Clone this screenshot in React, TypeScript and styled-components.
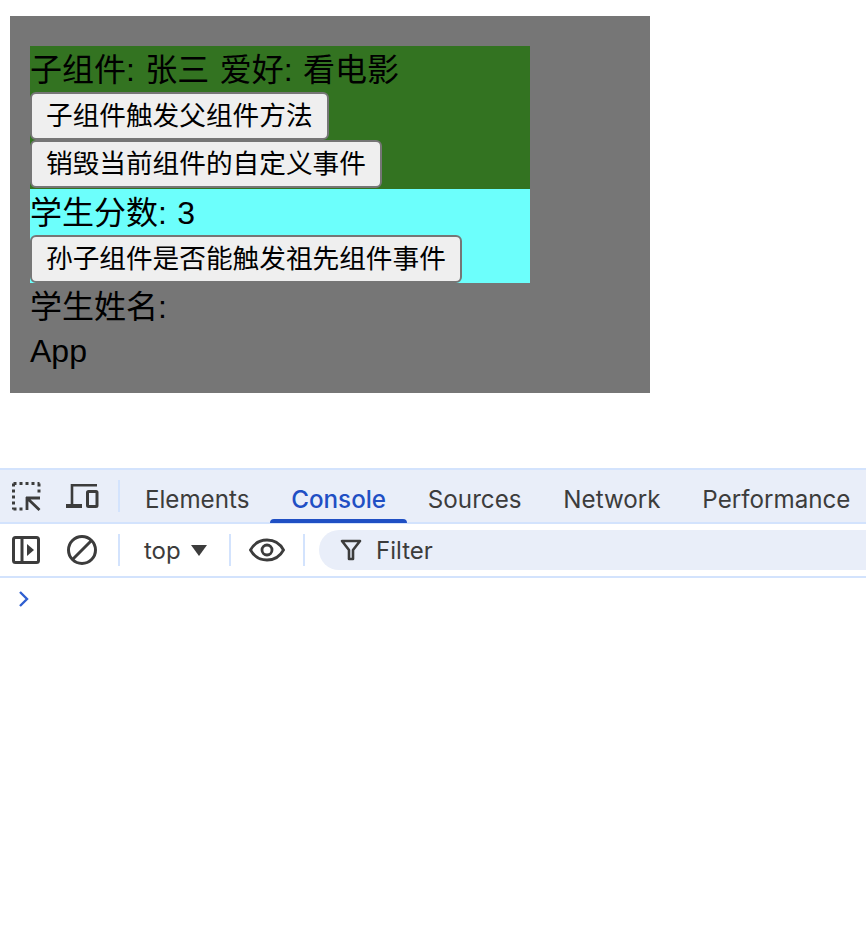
import React from 'react';
import styled, { createGlobalStyle } from 'styled-components';

const cjk = '"Liberation Sans", "Noto Sans CJK SC", sans-serif';

const GlobalStyle = createGlobalStyle`
  html, body {
    margin: 0;
    padding: 0;
    background: #fff;
  }
  body {
    width: 866px;
    height: 938px;
    overflow: hidden;
  }
`;

const AppBox = styled.div`
  box-sizing: border-box;
  width: 640px;
  height: 377px;
  margin: 16px 0 0 10px;
  padding: 30px 20px 20px;
  background: #767676;
  font-family: ${cjk};
  font-size: 32px;
  color: #000;
`;

const Panel = styled.div<{ $bg: string }>`
  width: 500px;
  background: ${({ $bg }) => $bg};
`;

const Line = styled.div`
  height: 46px;
  line-height: 48px;
  word-spacing: 1.5px;
  white-space: pre;
`;

const AppTitle = styled.div`
  height: 44px;
  line-height: 44px;
`;

const ButtonRow = styled.div<{ $height: number }>`
  height: ${({ $height }) => $height}px;
`;

const PageButton = styled.button`
  box-sizing: border-box;
  display: block;
  height: 48px;
  padding: 0 14px;
  border: 2px solid #767676;
  border-radius: 6px;
  background: #efefef;
  color: #000;
  font-family: ${cjk};
  font-size: 26.67px;
  line-height: 44px;
  white-space: nowrap;
`;

const DevTools = styled.div`
  margin-top: 75px;
  border-top: 2px solid #d3e3fd;
  font-family: Inter, Roboto, sans-serif;
  color: #3c3c3c;
`;

const TabBar = styled.div`
  display: flex;
  align-items: stretch;
  box-sizing: border-box;
  height: 54px;
  padding-left: 10px;
  background: #e9eef9;
  border-bottom: 2px solid #d3e3fd;
`;

const IconSlot = styled.div<{ $width: number; $shift?: number }>`
  flex: none;
  box-sizing: border-box;
  display: flex;
  align-items: center;
  justify-content: center;
  width: ${({ $width }) => $width}px;
  padding-left: ${({ $shift }) => $shift ?? 0}px;
`;

const Divider = styled.div`
  flex: none;
  width: 2px;
  height: 32px;
  align-self: center;
  background: #d3e3fd;
`;

const Tab = styled.div<{ $active?: boolean }>`
  position: relative;
  flex: none;
  padding: 0 20.9px;
  line-height: 59px;
  font-size: 24.2px;
  font-weight: ${({ $active }) => ($active ? 500 : 400)};
  color: ${({ $active }) => ($active ? '#1f4fc4' : '#3c3c3c')};
  ${({ $active }) =>
    $active &&
    `
    &::after {
      content: '';
      position: absolute;
      left: 0;
      right: 0;
      bottom: -1px;
      height: 4px;
      border-radius: 4px 4px 0 0;
      background: #1f4fc4;
    }
  `}
`;

const Tabs = styled.div`
  display: flex;
  margin-left: 4px;
`;

const Toolbar = styled.div`
  display: flex;
  align-items: center;
  box-sizing: border-box;
  height: 54px;
  padding-left: 10px;
  border-bottom: 2px solid #d3e3fd;
`;

const ContextPicker = styled.div`
  flex: none;
  display: flex;
  align-items: center;
  width: 109px;
  padding-left: 24px;
  box-sizing: border-box;
  gap: 10px;
  font-size: 24px;
`;

const FilterBox = styled.div`
  flex: 1;
  display: flex;
  align-items: center;
  height: 40px;
  margin-left: 14px;
  padding-left: 21px;
  gap: 14px;
  border-radius: 20px 0 0 20px;
  background: #e9eef9;
  font-size: 24px;
`;

const Prompt = styled.div`
  padding: 12px 0 0 17px;
  line-height: 0;
`;

const dark = '#3c3c3c';

const InspectIcon = () => (
  <svg width="30" height="30" viewBox="0 0 30 30" fill="none">
    <path
      d="M2.500 2.500h26M2.500 2.500v26M2.500 28h9M28 2.500v10"
      stroke={dark}
      strokeWidth="3"
      strokeDasharray="3 3"
    />
    <path d="M15 17h14M16 16v13M16 17l12.500 12" stroke={dark} strokeWidth="2.800" />
  </svg>
);

const DeviceIcon = () => (
  <svg width="34" height="26" viewBox="0 0 34 26" fill="none">
    <path d="M7 23V2.300h25" stroke={dark} strokeWidth="2.600" />
    <path d="M1 23h16" stroke={dark} strokeWidth="4" />
    <rect x="22.500" y="8.500" width="9.500" height="15" rx="1" stroke={dark} strokeWidth="3" />
  </svg>
);

const SidebarIcon = () => (
  <svg width="28" height="28" viewBox="0 0 28 28" fill="none">
    <rect x="1.500" y="1.500" width="25" height="25" rx="2" stroke={dark} strokeWidth="3" />
    <path d="M10 2v24" stroke={dark} strokeWidth="3" />
    <path d="M15 8l7 6-7 6z" fill={dark} />
  </svg>
);

const ClearIcon = () => (
  <svg width="32" height="32" viewBox="0 0 32 32" fill="none">
    <circle cx="16" cy="16" r="13.500" stroke={dark} strokeWidth="3" />
    <path d="M7 25L25 7" stroke={dark} strokeWidth="3" />
  </svg>
);

const CaretIcon = () => (
  <svg width="16" height="12" viewBox="0 0 16 12">
    <path d="M0 1h16L8 12z" fill={dark} />
  </svg>
);

const EyeIcon = () => (
  <svg width="36" height="24" viewBox="0 0 36 24" fill="none">
    <path
      d="M1.500 12C5 5.500 11 2 18 2s13 3.500 16.500 10C31 18.500 25 22 18 22S5 18.500 1.500 12z"
      stroke={dark}
      strokeWidth="2.800"
    />
    <circle cx="18" cy="12" r="5" stroke={dark} strokeWidth="2.800" />
  </svg>
);

const FilterIcon = () => (
  <svg width="22" height="22" viewBox="0 0 22 22" fill="none">
    <path d="M2 2h18l-7 9v9h-4v-9z" stroke={dark} strokeWidth="2.600" strokeLinejoin="round" />
  </svg>
);

const ChevronIcon = () => (
  <svg width="14" height="18" viewBox="0 0 14 18" fill="none">
    <path d="M3 2l7 7-7 7" stroke="#2f5fd0" strokeWidth="2.400" />
  </svg>
);

const App = () => (
  <>
    <GlobalStyle />
    <AppBox>
      <Panel $bg="#337321">
        <Line>子组件: 张三 爱好: 看电影</Line>
        <ButtonRow $height={48}>
          <PageButton>子组件触发父组件方法</PageButton>
        </ButtonRow>
        <ButtonRow $height={49}>
          <PageButton>销毁当前组件的自定义事件</PageButton>
        </ButtonRow>
      </Panel>
      <Panel $bg="#6cfffc">
        <Line>学生分数: 3</Line>
        <ButtonRow $height={48}>
          <PageButton>孙子组件是否能触发祖先组件事件</PageButton>
        </ButtonRow>
      </Panel>
      <Line>学生姓名:</Line>
      <AppTitle>App</AppTitle>
    </AppBox>
    <DevTools>
      <TabBar>
        <IconSlot $width={32}>
          <InspectIcon />
        </IconSlot>
        <IconSlot $width={76} $shift={4}>
          <DeviceIcon />
        </IconSlot>
        <Divider />
        <Tabs>
          <Tab>Elements</Tab>
          <Tab $active>Console</Tab>
          <Tab>Sources</Tab>
          <Tab>Network</Tab>
          <Tab>Performance</Tab>
        </Tabs>
      </TabBar>
      <Toolbar>
        <IconSlot $width={32}>
          <SidebarIcon />
        </IconSlot>
        <IconSlot $width={76} $shift={4}>
          <ClearIcon />
        </IconSlot>
        <Divider />
        <ContextPicker>
          top <CaretIcon />
        </ContextPicker>
        <Divider />
        <IconSlot $width={72}>
          <EyeIcon />
        </IconSlot>
        <Divider />
        <FilterBox>
          <FilterIcon />
          Filter
        </FilterBox>
      </Toolbar>
      <Prompt>
        <ChevronIcon />
      </Prompt>
    </DevTools>
  </>
);

export default App;
